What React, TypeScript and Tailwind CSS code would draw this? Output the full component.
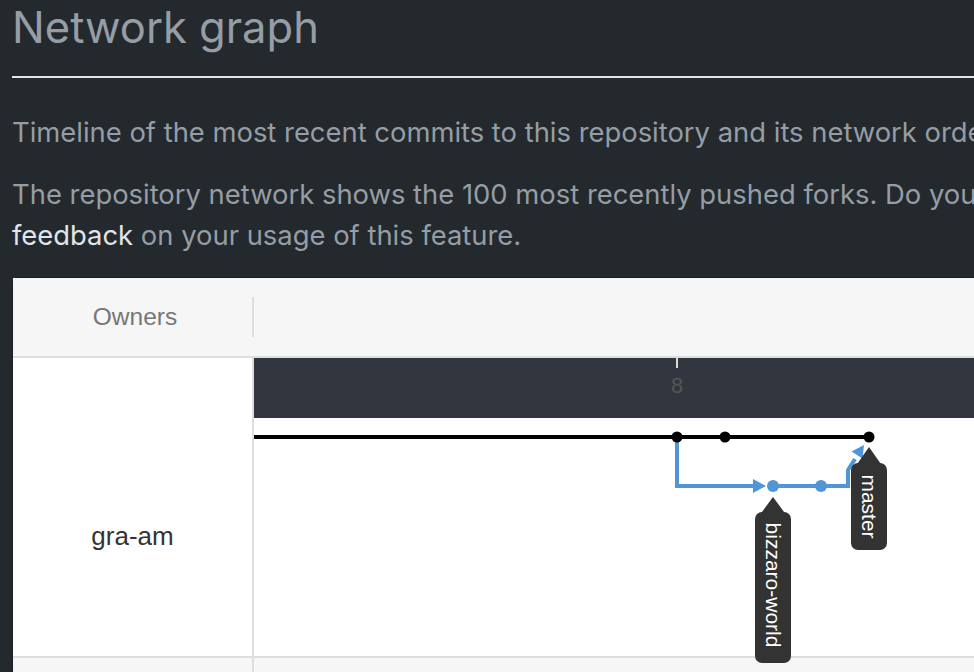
export default function App() {
  return (
    <div className="h-[672px] w-[974px] overflow-hidden bg-[#24292e]">
      <div className="w-[1400px] pl-[12px]" style={{ fontFamily: "Inter, 'Noto Sans', sans-serif" }}>
        <h2 className="border-b-2 border-[#e1e4e8] pb-[21px] text-[43.5px] font-normal leading-[55px] text-[#959da5]">
          Network graph
        </h2>

        <p className="mt-[34px] whitespace-nowrap text-[27.4px] leading-[41px] text-[#959da5]">
          Timeline of the most recent commits to this repository and its network ordered by most recently pushed to.
        </p>
        <p className="mt-[21px] whitespace-nowrap text-[27.4px] leading-[41px] text-[#959da5]">
          The repository network shows the 100 most recently pushed forks. Do you
          <br />
          <a href="#" className="text-[#e1e4e8]">feedback</a> on your usage of this feature.
        </p>

        <NetworkCard />
      </div>
    </div>
  );
}

function NetworkCard() {
  return (
    <div
      className="mt-[21px] rounded-t-[4px] border border-[#1b1f23] bg-white"
      style={{ fontFamily: "'Liberation Sans', Arial, sans-serif" }}
    >
      {/* Header */}
      <div className="flex h-[80px] items-center border-b-2 border-[#dedede] bg-[#f6f6f6]">
        <div className="flex w-[239px] justify-center pl-[5px] text-[24.5px] text-[#767676]">Owners</div>
        <div className="h-[40px] w-[2px] bg-[#dedede]" />
      </div>

      {/* Body */}
      <div className="flex h-[298px]">
        <div className="flex w-[241px] flex-col border-r-2 border-[#dedede]">
          <div className="h-[60px]" />
          <div className="flex flex-1 items-center justify-center pb-[2px] text-[26px] text-[#333]">gra-am</div>
        </div>
        <div className="relative flex-1">
          <div className="h-[60px] bg-[#32363e]" />
          <Graph />
        </div>
      </div>

      {/* Next row */}
      <div className="flex h-[20px] border-t-2 border-[#dedede] bg-[#f6f6f6]">
        <div className="w-[241px] border-r-2 border-[#dedede]" />
      </div>
    </div>
  );
}

function Graph() {
  const blue = "#4f96d6";
  return (
    <svg
      className="absolute left-0 top-0 z-10 overflow-visible"
      width="700"
      height="310"
      viewBox="0 0 700 310"
    >
      {/* date tick */}
      <line x1="423" y1="0" x2="423" y2="10" stroke="#dcdcdc" strokeWidth="2" />
      <text x="423" y="35" fill="#555" fontSize="22" textAnchor="middle" fontFamily="'Liberation Sans', Arial, sans-serif">
        8
      </text>

      {/* master line */}
      <line x1="0" y1="79" x2="615" y2="79" stroke="#000" strokeWidth="4" />

      {/* branch */}
      <path d="M423 79 V128 H501" fill="none" stroke={blue} strokeWidth="4" />
      <polygon points="499,121 512,128 499,135" fill={blue} />
      <path d="M519 128 H594 V112 L601 101" fill="none" stroke={blue} strokeWidth="4" />
      <polygon points="610,87 608.5,100.5 597.5,93.5" fill={blue} />
      <circle cx="519" cy="128" r="6" fill={blue} />
      <circle cx="567" cy="128" r="6" fill={blue} />

      <circle cx="423" cy="79" r="5.5" fill="#000" />
      <circle cx="471" cy="79" r="5.5" fill="#000" />
      <circle cx="615" cy="79" r="5.5" fill="#000" />

      {/* labels */}
      <g fontFamily="'Liberation Sans', Arial, sans-serif" fontSize="21">
        <polygon points="519,139 505,158 533,158" fill="#333" />
        <rect x="501" y="154" width="36" height="151" rx="7" fill="#333" />
        <text x="519" y="227" fill="#fff" textAnchor="middle" dominantBaseline="central" transform="rotate(90 519 227)">
          bizzaro-world
        </text>

        <polygon points="615,89 601,109 629,109" fill="#333" />
        <rect x="597" y="105" width="36" height="87" rx="7" fill="#333" />
        <text x="615" y="148.5" fill="#fff" textAnchor="middle" dominantBaseline="central" transform="rotate(90 615 148.5)">
          master
        </text>
      </g>
    </svg>
  );
}
